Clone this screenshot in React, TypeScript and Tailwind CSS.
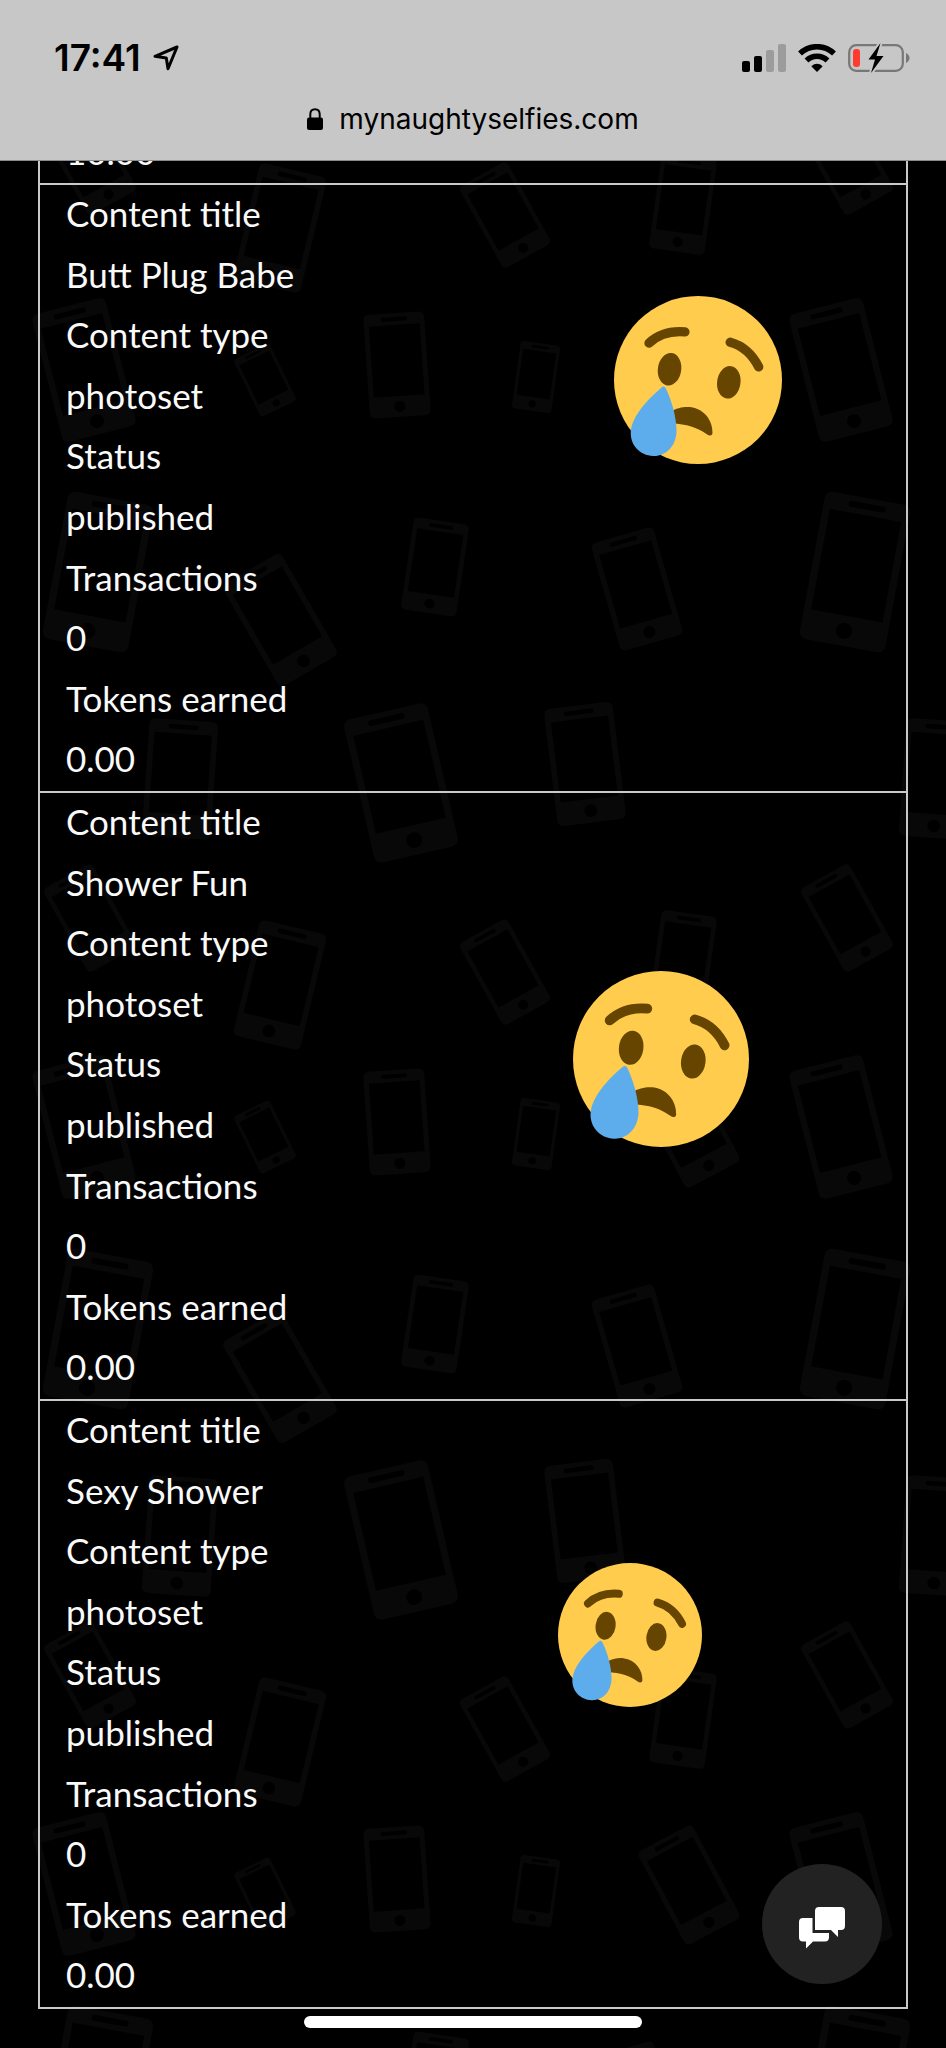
type Entry = {
  title: string;
  type: string;
  status: string;
  transactions: string;
  tokens: string;
  face: string;
};

const ENTRIES: Entry[] = [
  {
    title: "Butt Plug Babe",
    type: "photoset",
    status: "published",
    transactions: "0",
    tokens: "0.00",
    face: "right-[124px] top-[111px] size-[168px]",
  },
  {
    title: "Shower Fun",
    type: "photoset",
    status: "published",
    transactions: "0",
    tokens: "0.00",
    face: "right-[157px] top-[178px] size-[176px]",
  },
  {
    title: "Sexy Shower",
    type: "photoset",
    status: "published",
    transactions: "0",
    tokens: "0.00",
    face: "right-[204px] top-[162px] size-[144px]",
  },
];

// Centre x, centre y, width, height and tilt of each handset in one wallpaper tile.
const TILE = 757;
const HANDSETS = [
  [841, 370, 76, 132, -14.3],
  [265, 380, 40, 64, -26],
  [397, 365, 61, 104, -4],
  [536, 377, 40, 68, 8],
  [855, 572, 87, 150, 10.5],
  [435, 567, 56, 93, 8.5],
  [637, 589, 65, 112, -16],
  [280, 620, 68, 118, -30],
  [180, 779, 69, 118, 4],
  [401, 783, 86, 147, -13],
  [585, 764, 69, 118, -7],
  [847, 161, 56, 96, -29],
  [280, 228, 69, 119, 13.5],
  [505, 215, 55, 94, -29],
  [683, 204, 56, 96, 8],
  [689, 371, 62, 106, -28],
];

function Wallpaper() {
  const shifts = [-TILE, 0, TILE];
  const rows = [-TILE, 0, TILE, 2 * TILE];
  return (
    <svg className="absolute inset-0 size-full" aria-hidden="true">
      <defs>
        <g id="tile" fill="#080808">
          {HANDSETS.map(([x, y, w, h, tilt]) => (
            <g key={`${x}-${y}`} transform={`translate(${x} ${y}) rotate(${tilt}) scale(${w / 60} ${h / 104})`}>
              <path
                fillRule="evenodd"
                d="M-24-52H24Q30-52 30-46V46Q30 52 24 52H-24Q-30 52-30 46V-46Q-30-52-24-52ZM-25-40V31H25V-40ZM-12-48Q-14-46-12-44H12Q14-46 12-48ZM0 36A5.500 5.500 0 1 0 0 47A5.500 5.500 0 1 0 0 36Z"
              />
            </g>
          ))}
        </g>
      </defs>
      {rows.map((y) => shifts.map((x) => <use key={`${x}:${y}`} href="#tile" x={x} y={y} />))}
    </svg>
  );
}

function CryingFace({ className }: { className: string }) {
  return (
    <svg viewBox="0 0 36 36" className={className} role="img" aria-label="Crying face">
      <circle cx="18" cy="18" r="18" fill="#FFCC4D" />
      <g fill="#664500">
        <ellipse cx="11.900" cy="15.700" rx="2.500" ry="3.500" transform="rotate(8 11.900 15.700)" />
        <ellipse cx="24.600" cy="18.500" rx="2.500" ry="3.500" transform="rotate(8 24.600 18.500)" />
        <path d="M12 24.900C13.500 23.900 15 23.700 16.300 23.800C19.600 24.200 21.200 27 21.100 29.400C21 30 20.400 30 19.900 29.600C17.800 28.100 15.500 27.400 12.500 27.300Z" />
      </g>
      <g fill="none" stroke="#664500" strokeWidth="2" strokeLinecap="round">
        <path d="M7.500 10.100Q10.500 7.300 15.200 7.700" />
        <path d="M24.900 9.900Q28.900 11 31 15.200" />
      </g>
      <path
        fill="#5DADEC"
        d="M10.200 19.600C10.600 19.200 11 19.500 11.200 20C12.400 22.600 13.400 26 13.400 29C13.300 32.300 11 34.400 8.400 34.300C5.500 34.200 3.400 31.900 3.600 29C3.900 25.800 7 22.300 10.200 19.600Z"
      />
    </svg>
  );
}

function StatusIcons() {
  return (
    <div className="flex items-center gap-3">
      <svg viewBox="0 0 44 28" className="h-7 w-11" role="img" aria-label="Signal strength">
        <rect x="0" y="17" width="8" height="11" rx="2" />
        <rect x="12" y="12" width="8" height="16" rx="2" />
        <rect x="24" y="6" width="8" height="22" rx="2" fill="#9c9c9c" />
        <rect x="36" y="0" width="8" height="28" rx="2" fill="#9c9c9c" />
      </svg>
      <svg viewBox="0 0 38 28" className="h-7 w-[38px]" role="img" aria-label="Wi-Fi">
        <g fill="none" stroke="#000" strokeWidth="5.500">
          <path d="M2 9.500A24.500 24.500 0 0 1 36 9.500" />
          <path d="M8.500 16.500A15 15 0 0 1 29.500 16.500" />
        </g>
        <path d="M19 28L13.300 22.200Q19 17.500 24.700 22.200Z" />
      </svg>
      <svg viewBox="0 0 62 30" className="h-[30px] w-[62px]" role="img" aria-label="Battery charging">
        <rect x="1.200" y="2.200" width="53.600" height="25.600" rx="7" fill="none" stroke="#777" strokeWidth="2.200" />
        <path d="M58 10Q61.500 12 61.500 15T58 20Z" fill="#777" />
        <rect x="5" y="6" width="7" height="18" rx="3" fill="#ff3b30" />
        <path d="M32.500 0L20.500 16.500H27L23 30L35.500 13H28.500Z" fill="#000" stroke="#c7c7c7" strokeWidth="4" paintOrder="stroke" />
      </svg>
    </div>
  );
}

function Field({ label, value }: { label: string; value: string }) {
  return (
    <>
      <dt>{label}</dt>
      <dd>{value}</dd>
    </>
  );
}

export default function App() {
  return (
    <div className="relative flex min-h-screen flex-col overflow-hidden bg-black">
      <Wallpaper />

      <header className="relative flex h-[161px] flex-col border-b border-[#8a8a8a] bg-[#c7c7c7] font-['Inter',sans-serif] text-black">
        <div className="flex items-center justify-between pt-8 pr-9 pl-[54px]">
          <div className="flex items-center gap-3">
            <time className="text-[37px] leading-[52px] font-semibold">17:41</time>
            <svg viewBox="0 0 26 26" className="size-[26px]" role="img" aria-label="Location in use">
              <path
                d="M24 2L2 11.300L13.300 13L15 23.800Z"
                fill="none"
                stroke="#000"
                strokeWidth="3"
                strokeLinejoin="round"
              />
            </svg>
          </div>
          <StatusIcons />
        </div>
        <a href="#top" className="flex items-center justify-center gap-4 pt-4 text-[28px] leading-[38px]">
          <svg viewBox="0 0 16 22" className="h-[22px] w-4" aria-hidden="true">
            <path d="M3.300 11V6.200Q3.300 1.200 8 1.200T12.700 6.200V11" fill="none" stroke="#000" strokeWidth="2" />
            <rect x="0" y="9.500" width="16" height="12.500" rx="2" />
          </svg>
          mynaughtyselfies.com
        </a>
      </header>

      <main
        id="top"
        className="relative mx-[38px] border-x-2 border-b-2 border-[#c9c9c9] font-['Lato',sans-serif] text-[35px] leading-[56px] text-[#fafafa]"
      >
        <div className="flex h-[22px] items-end overflow-hidden px-[26px] pb-1">
          <span>10.00</span>
        </div>
        {ENTRIES.map((entry) => (
          <article key={entry.title} className="relative border-t-2 border-[#c9c9c9]">
            <dl className="grid min-h-[606px] auto-rows-fr px-[26px]">
              <Field label="Content title" value={entry.title} />
              <Field label="Content type" value={entry.type} />
              <Field label="Status" value={entry.status} />
              <Field label="Transactions" value={entry.transactions} />
              <Field label="Tokens earned" value={entry.tokens} />
            </dl>
            <CryingFace className={`absolute ${entry.face}`} />
          </article>
        ))}
      </main>

      <button
        type="button"
        aria-label="Open chat"
        className="fixed right-16 bottom-16 flex size-[120px] items-center justify-center rounded-full bg-[#222] pt-2"
      >
        <svg viewBox="0 0 46 42" className="h-[42px] w-[46px]" fill="#fff" aria-hidden="true">
          <path d="M20 0H42Q46 0 46 4V19Q46 23 42 23H39V30L32 23H16V4Q16 0 20 0Z" />
          <path d="M4 11H13.500V26H30V30Q30 34.500 26 34.500H14L7 41.500V34.500H4Q0 34.500 0 30.500V15Q0 11 4 11Z" />
        </svg>
      </button>
      <div className="fixed inset-x-0 bottom-5 mx-auto h-3 w-[338px] rounded-full bg-white" />
    </div>
  );
}
